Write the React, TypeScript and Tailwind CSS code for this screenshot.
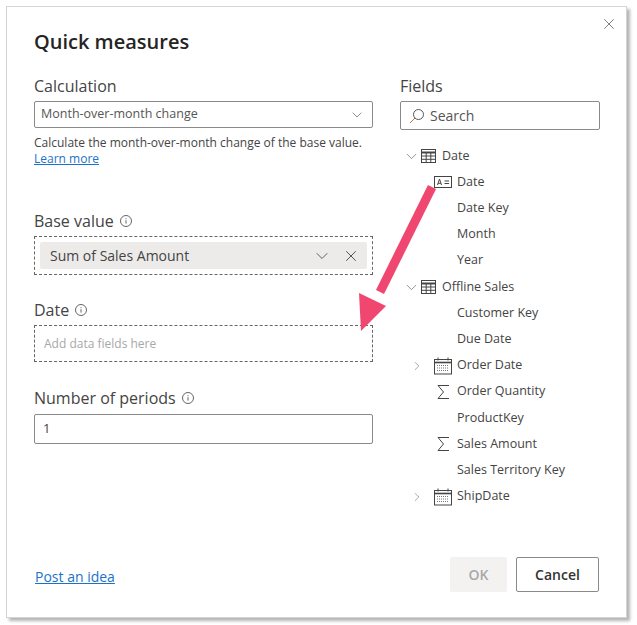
import { ChevronDown, ChevronRight, X } from 'lucide-react';

const font = { fontFamily: '"Open Sans", "Noto Sans", sans-serif' };

function InfoIcon() {
  return (
    <svg width="14" height="14" viewBox="0 0 14 14" fill="none" stroke="#666" strokeWidth="1">
      <circle cx="7" cy="7" r="5.5" />
      <path d="M7 6.2v3.4M7 4.2v1" />
    </svg>
  );
}

function TableIcon() {
  return (
    <svg width="15" height="14" viewBox="0 0 15 14" fill="none" stroke="#444" strokeWidth="1">
      <rect x="0.5" y="0.5" width="14" height="13" />
      <path d="M0.5 3.5h14" strokeWidth="2" />
      <path d="M0.5 7h14M0.5 10.3h14M5.2 3v10.5M9.8 3v10.5" />
    </svg>
  );
}

function CardIcon() {
  return (
    <svg width="18" height="14" viewBox="0 0 18 14" fill="none" stroke="#444" strokeWidth="1">
      <rect x="0.5" y="1.5" width="17" height="11" />
      <path d="M3.5 10l2-6 2 6M4.2 8.3h2.6M10.5 6h4.5M10.5 8.5h4.5" />
    </svg>
  );
}

function CalendarIcon() {
  return (
    <svg width="18" height="18" viewBox="0 0 18 18" fill="none" stroke="#444" strokeWidth="1">
      <rect x="0.5" y="2.5" width="17" height="14.5" />
      <path d="M0.5 5.5h17" strokeWidth="1.6" />
      <path d="M4 0.5v3M14 0.5v3" />
      <path d="M3 8.5h12M3 11h12M3 13.5h12" stroke="#777" strokeDasharray="1 1" />
    </svg>
  );
}

function SigmaIcon() {
  return (
    <svg width="13" height="16" viewBox="0 0 13 16" fill="none" stroke="#444" strokeWidth="1">
      <path d="M12 1.5H1l5.5 6.5L1 14.5h11" />
    </svg>
  );
}

type Row = { label: string; indent: 'table' | 'field'; icon?: 'table' | 'card' | 'calendar' | 'sigma'; caret?: 'down' | 'right' };

const rows: Row[] = [
  { label: 'Date', indent: 'table', icon: 'table', caret: 'down' },
  { label: 'Date', indent: 'field', icon: 'card' },
  { label: 'Date Key', indent: 'field' },
  { label: 'Month', indent: 'field' },
  { label: 'Year', indent: 'field' },
  { label: 'Offline Sales', indent: 'table', icon: 'table', caret: 'down' },
  { label: 'Customer Key', indent: 'field' },
  { label: 'Due Date', indent: 'field' },
  { label: 'Order Date', indent: 'field', icon: 'calendar', caret: 'right' },
  { label: 'Order Quantity', indent: 'field', icon: 'sigma' },
  { label: 'ProductKey', indent: 'field' },
  { label: 'Sales Amount', indent: 'field', icon: 'sigma' },
  { label: 'Sales Territory Key', indent: 'field' },
  { label: 'ShipDate', indent: 'field', icon: 'calendar', caret: 'right' },
];

function TreeRow({ row }: { row: Row }) {
  if (row.indent === 'table') {
    return (
      <div className="flex h-[26.2px] items-center pl-[3px]">
        <ChevronDown size={17} strokeWidth={1} className="mr-[1px] text-[#666]" />
        <TableIcon />
        <span className="ml-[6px] text-[12.5px] text-[#444]">{row.label}</span>
      </div>
    );
  }
  return (
    <div className="flex h-[26.2px] items-center">
      <div className="flex w-[34px] shrink-0 items-center justify-center">
        {row.caret === 'right' && <ChevronRight size={14} strokeWidth={1} className="text-[#666]" />}
      </div>
      <div className="flex w-[18px] shrink-0 justify-center">
        {row.icon === 'card' && <CardIcon />}
        {row.icon === 'calendar' && <CalendarIcon />}
        {row.icon === 'sigma' && <SigmaIcon />}
      </div>
      <span className="ml-[5px] text-[12.5px] text-[#444]">{row.label}</span>
    </div>
  );
}

export default function App() {
  return (
    <div style={font} className="h-[625px] w-[637px] bg-white pl-[6px] pt-[6px]">
      <div className="relative h-[612px] w-[621px] border border-[#d4d4d4] bg-white pl-[27px] pr-[27px] pt-[21px] shadow-[3px_3px_3px_#b5b5b5]">
        <button className="absolute right-[8px] top-[8px] text-[#555]">
          <X size={18} strokeWidth={1} />
        </button>

        <h1 className="h-[28px] text-[20px] font-semibold leading-[28px] text-[#252423]">Quick measures</h1>

        <div className="mt-[18px] flex">
          {/* Left column */}
          <div className="w-[339px] shrink-0">
            <div className="h-[24px] text-[16px] leading-[24px] text-[#444]">Calculation</div>
            <div className="mt-[3px] flex h-[27px] items-center justify-between rounded-[2px] border border-[#8a8a8a] pl-[6px] pr-[7px] text-[12.5px] text-[#555]">
              <span>Month-over-month change</span>
              <ChevronDown size={16} strokeWidth={1} className="text-[#555]" />
            </div>
            <p className="mt-[7px] text-[12px] leading-[16px] text-[#444]">
              Calculate the month-over-month change of the base value.{' '}
              <span className="text-[#1a73c8] underline">Learn more</span>
            </p>

            <div className="mt-[42px] flex h-[24px] items-center gap-[5px] text-[16px] text-[#444]">
              Base value <InfoIcon />
            </div>
            <div className="mt-[3px] h-[39px] border border-dashed border-[#666] p-[5px]">
              <div className="flex h-[27px] items-center justify-between rounded-[2px] bg-[#edebe9] pl-[10px] pr-[7px] text-[14px] text-[#444]">
                <span>Sum of Sales Amount</span>
                <div className="flex items-center gap-[10px] text-[#444]">
                  <ChevronDown size={20} strokeWidth={1} />
                  <X size={18} strokeWidth={1.2} />
                </div>
              </div>
            </div>

            <div className="mt-[23px] flex h-[24px] items-center gap-[5px] text-[16px] text-[#444]">
              Date <InfoIcon />
            </div>
            <div className="mt-[3px] flex h-[37px] items-center border border-dashed border-[#666] pl-[9px] text-[12px] text-[#a8a8a8]">
              Add data fields here
            </div>

            <div className="mt-[24px] flex h-[24px] items-center gap-[5px] text-[16px] text-[#444]">
              Number of periods <InfoIcon />
            </div>
            <div className="mt-[4px] flex h-[30px] items-center rounded-[2px] border border-[#8a8a8a] pl-[8px] text-[13px] text-[#444]">
              1
            </div>
          </div>

          {/* Fields column */}
          <div className="ml-[27px] w-[200px] shrink-0">
            <div className="h-[24px] text-[16px] leading-[24px] text-[#444]">Fields</div>
            <div className="mt-[3px] flex h-[29px] items-center rounded-[2px] border border-[#8a8a8a] pl-[8px] text-[14px] text-[#555]">
              <svg width="16" height="16" viewBox="0 0 16 16" fill="none" strokeWidth="1" className="mr-[5px]">
                <circle cx="9.5" cy="6.5" r="5" stroke="#555" />
                <path d="M6 10L1 15" stroke="#b5793a" />
              </svg>
              Search
            </div>
            <div className="mt-[13px]">
              {rows.map((row, i) => (
                <TreeRow key={i} row={row} />
              ))}
            </div>
          </div>
        </div>

        {/* Footer */}
        <div className="absolute bottom-[25px] left-[28px] right-[27px] flex items-center justify-between">
          <span className="mt-[4px] text-[14px] text-[#1a73c8] underline">Post an idea</span>
          <div className="flex gap-[9px]">
            <button className="h-[35px] w-[57px] rounded-[2px] bg-[#f3f2f1] text-[14px] font-semibold text-[#a8a8a8]">OK</button>
            <button className="h-[35px] w-[83px] rounded-[2px] border border-[#8a8a8a] bg-white text-[14px] font-semibold text-[#333]">Cancel</button>
          </div>
        </div>

        {/* Annotation arrow drawn over the dialog */}
        <svg className="pointer-events-none absolute left-[-7px] top-[-7px]" width="637" height="625" viewBox="0 0 637 625" fill="none">
          <path d="M432 187L380 292" stroke="#f04770" strokeWidth="9" />
          <path d="M361 331L359 293L386 306Z" fill="#f04770" />
        </svg>
      </div>
    </div>
  );
}
